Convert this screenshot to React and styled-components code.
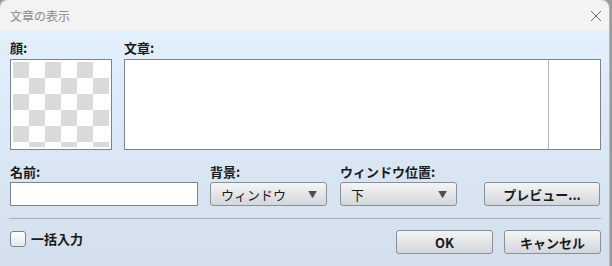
import React from "react";
import styled, { createGlobalStyle } from "styled-components";

const GlobalStyle = createGlobalStyle`
    html, body {
        margin: 0;
        padding: 0;
        width: 612px;
        height: 266px;
        overflow: hidden;
        background: #9a9a9a;
    }

    body {
        font-family: "Noto Sans CJK JP", "Noto Sans", sans-serif;
        color: #1a1a1a;
    }
`;

const Dialog = styled.div`
    width: 609px;
    height: 266px;
    border-radius: 8px 8px 0 0;
    overflow: hidden;
    display: flex;
    flex-direction: column;
    box-shadow: 0 0 0 1px #b8b8b8;
`;

const TitleBar = styled.div`
    height: 31px;
    flex-shrink: 0;
    background: #f3f3f3;
    display: flex;
    align-items: center;
    justify-content: space-between;
    padding: 0 3px 0 10px;
`;

const Title = styled.span`
    font-size: 12px;
    color: #8a8a8a;
`;

const CloseButton = styled.button`
    width: 20px;
    height: 20px;
    border: none;
    background: none;
    padding: 0;
    display: flex;
    align-items: center;
    justify-content: center;
`;

const Body = styled.div`
    flex: 1;
    background: linear-gradient(#e2effd, #d3dfec);
    padding: 9px 8px 0 10px;
    display: flex;
    flex-direction: column;
`;

const Row = styled.div`
    display: flex;
    align-items: ${(p) => p.$align || "flex-start"};
    margin-top: ${(p) => p.$top || 0}px;
`;

const Field = styled.div`
    display: flex;
    flex-direction: column;
    gap: ${(p) => p.$gap || 2}px;
    width: ${(p) => p.$width}px;
    margin-left: ${(p) => p.$left || 0}px;
`;

const Label = styled.label`
    font-size: 13px;
    font-weight: bold;
    line-height: 16px;
    height: 16px;
`;

const FaceBox = styled.div`
    height: 91px;
    border: 1px solid #7d8389;
    box-sizing: border-box;
    background-color: #ffffff;
    background-image: conic-gradient(#ffffff 25%, #dadada 0 50%, #ffffff 0 75%, #dadada 0);
    background-size: 32px 32px;
    background-position: 3px 3px;
    background-origin: border-box;
    box-shadow: inset 0 0 0 2px #ffffff;
`;

const MessageBox = styled.div`
    height: 91px;
    border: 1px solid #7d8389;
    box-sizing: border-box;
    background: #ffffff;
    display: flex;
    justify-content: flex-end;
`;

const Gutter = styled.div`
    width: 51px;
    border-left: 1px solid #b9b9b9;
`;

const TextInput = styled.input`
    height: 24px;
    box-sizing: border-box;
    border: 1px solid #7d8389;
    background: #ffffff;
    outline: none;
    padding: 0 4px;
`;

const Select = styled.div`
    height: 24px;
    box-sizing: border-box;
    border: 1px solid #8b9096;
    border-radius: 3px;
    background: linear-gradient(#f4f5f6, #d3d6da);
    display: flex;
    align-items: center;
    justify-content: space-between;
    padding: 0 9px 0 10px;
    font-size: 13px;
`;

const Arrow = styled.span`
    font-size: 9px;
    color: #4a4d52;
`;

const Button = styled.button`
    width: ${(p) => p.$width || 97}px;
    height: 24px;
    margin-left: ${(p) => p.$left || 0}px;
    box-sizing: border-box;
    border: 1px solid #8b9096;
    border-radius: 3px;
    background: linear-gradient(#f4f5f6, #d3d6da);
    font-family: inherit;
    font-size: 13px;
    font-weight: bold;
    color: #1a1a1a;
    padding: 0;
`;

const Separator = styled.div`
    height: 1px;
    background: #a9b1ba;
    margin: 12px 0 0 -1px;
`;

const CheckLabel = styled.label`
    display: flex;
    align-items: center;
    gap: 5px;
    font-size: 13px;
    font-weight: bold;
    margin-top: -1px;
`;

const CheckBox = styled.span`
    width: 16px;
    height: 16px;
    box-sizing: border-box;
    border: 1px solid #7d8389;
    border-radius: 3px;
    background: linear-gradient(#ffffff, #e4e9ef);
`;

const Spacer = styled.div`
    flex: 1;
`;

export default function App() {
    return (
        <>
            <GlobalStyle />
            <Dialog>
                <TitleBar>
                    <Title>文章の表示</Title>
                    <CloseButton>
                        <svg width="12" height="12" viewBox="0 0 12 12">
                            <path d="M1 1 L11 11 M11 1 L1 11" stroke="#6a6a6a" strokeWidth="1" fill="none" />
                        </svg>
                    </CloseButton>
                </TitleBar>
                <Body>
                    <Row>
                        <Field $width={102} $gap={3}>
                            <Label>顔:</Label>
                            <FaceBox />
                        </Field>
                        <Field $width={477} $gap={3} $left={12}>
                            <Label>文章:</Label>
                            <MessageBox>
                                <Gutter />
                            </MessageBox>
                        </Field>
                    </Row>
                    <Row $align="flex-end" $top={14}>
                        <Field $width={188}>
                            <Label>名前:</Label>
                            <TextInput />
                        </Field>
                        <Field $width={117} $left={12}>
                            <Label>背景:</Label>
                            <Select>
                                ウィンドウ
                                <Arrow>▼</Arrow>
                            </Select>
                        </Field>
                        <Field $width={117} $left={13}>
                            <Label>ウィンドウ位置:</Label>
                            <Select>
                                下
                                <Arrow>▼</Arrow>
                            </Select>
                        </Field>
                        <Button $width={116} $left={27}>
                            プレビュー...
                        </Button>
                    </Row>
                    <Separator />
                    <Row $top={11}>
                        <CheckLabel>
                            <CheckBox />
                            一括入力
                        </CheckLabel>
                        <Spacer />
                        <Button>OK</Button>
                        <Button $left={11}>キャンセル</Button>
                    </Row>
                </Body>
            </Dialog>
        </>
    );
}
